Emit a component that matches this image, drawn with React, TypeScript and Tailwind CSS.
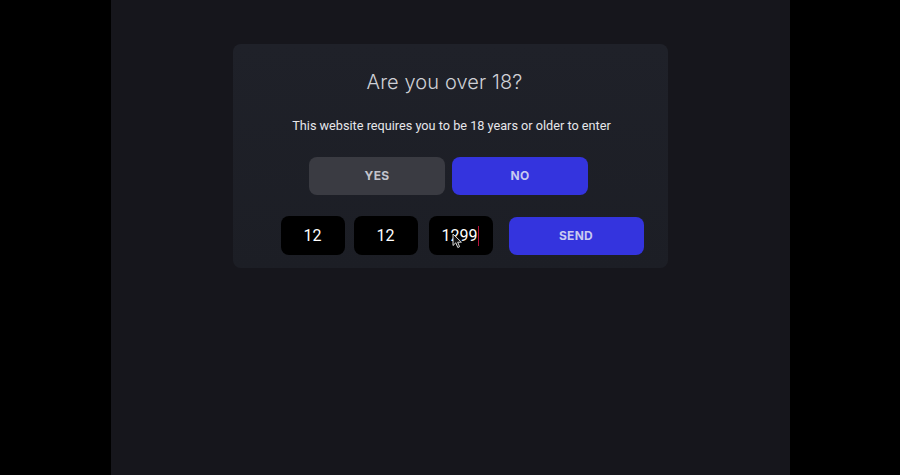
import React from "react";

const DateBox = ({ value, caret }: { value: string; caret?: boolean }) => {
  return (
    <div className="relative flex h-[39px] w-[64px] items-center justify-center rounded-[8px] bg-black text-[16px] text-white">
      <span>{value}</span>
      {caret && <span className="ml-[1px] h-[20px] w-[1px] bg-[#b3123a]" />}
    </div>
  );
};

const Pointer = () => (
  <svg
    className="pointer-events-none absolute left-[23px] top-[17px]"
    width="11"
    height="16"
    viewBox="0 0 11 16"
  >
    <path
      d="M1 1 L1 12.5 L3.8 9.8 L5.8 14.5 L7.6 13.7 L5.7 9.2 L9.4 9.2 Z"
      fill="#111"
      stroke="#ddd"
      strokeWidth="1"
      strokeLinejoin="round"
    />
  </svg>
);

const App = () => {
  return (
    <div className="flex h-[475px] w-[900px] justify-center bg-black font-['Roboto',sans-serif]">
      <div className="flex h-full w-[679px] justify-center bg-[#16161c]">
        <div className="mt-[44px] flex h-[224px] w-[435px] flex-col items-center rounded-[8px] bg-gradient-to-b from-[#1f2129] to-[#1c1e25] pt-[24px] pl-[3px]">
          <h1 className="mr-[14px] h-[28px] font-['Inter',sans-serif] text-[20px] font-light leading-[28px] tracking-[0.1px] text-[#cfd0d6]">
            Are you over 18?
          </h1>
          <p className="mt-[20px] text-[12.7px] leading-[20px] text-[#e6e6ea]">
            This website requires you to be 18 years or older to enter
          </p>
          <div className="mt-[21px] flex gap-[7px] pr-[6px]">
            <button className="h-[38px] w-[136px] rounded-[8px] bg-[#3a3b42] font-['Inter',sans-serif] text-[12px] font-bold tracking-[0.3px] text-[#c3c4cc]">
              YES
            </button>
            <button className="h-[38px] w-[136px] rounded-[8px] bg-[#3434de] font-['Inter',sans-serif] text-[12px] font-bold tracking-[0.3px] text-[#c8c9f0]">
              NO
            </button>
          </div>
          <div className="mt-[21px] flex items-center pl-[21px]">
            <div className="flex gap-[9px]">
              <DateBox value="12" />
              <DateBox value="12" />
              <div className="relative ml-[2px]">
                <DateBox value="1299" caret />
                <Pointer />
              </div>
            </div>
            <button className="ml-[16px] h-[38px] w-[135px] rounded-[8px] bg-[#3434de] font-['Inter',sans-serif] text-[12px] font-bold tracking-[0.3px] text-[#c8c9f0]">
              SEND
            </button>
          </div>
        </div>
      </div>
    </div>
  );
};

export default App;
